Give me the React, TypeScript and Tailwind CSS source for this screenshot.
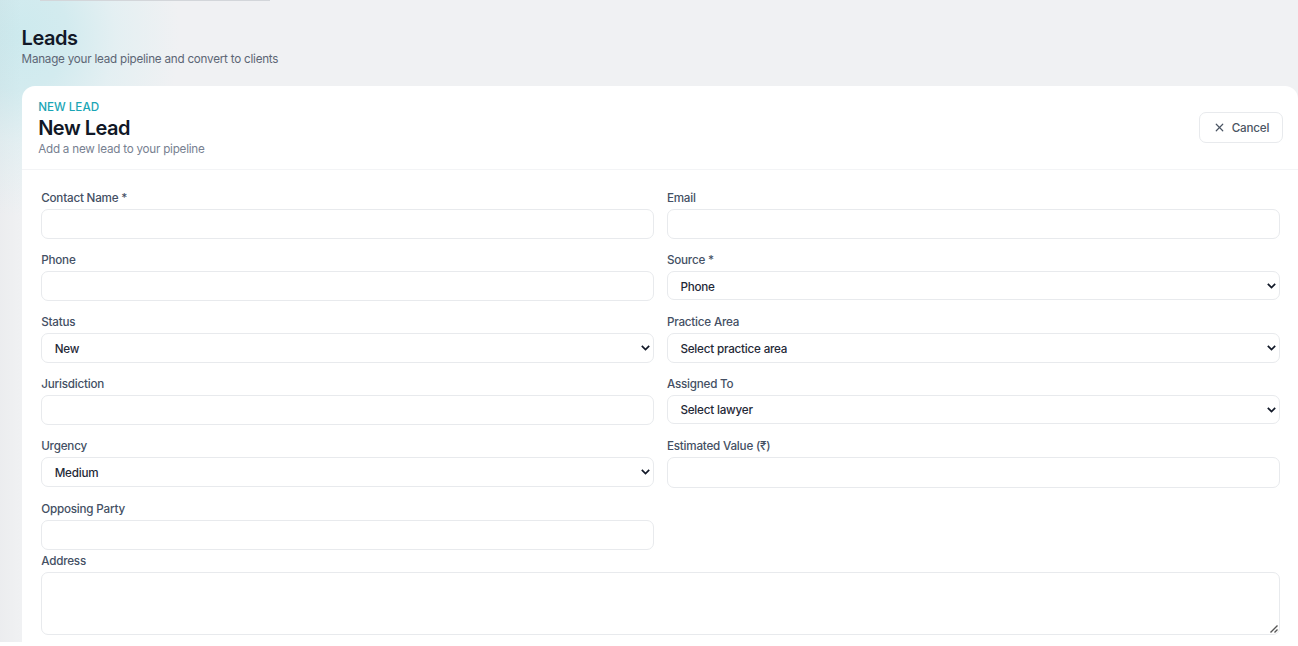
import { ReactNode, useState } from "react";
import { X } from "lucide-react";

const controlClass =
  "block w-full rounded-[7px] border border-[#e8eaed] bg-white text-[11.65px] font-medium tracking-[-0.2px] text-[#1f2937] outline-none";

type FieldProps = {
  label: string;
  children: ReactNode;
};

function Field({ label, children }: FieldProps) {
  return (
    <label className="block">
      <span className="mb-[3px] block text-[11.65px] leading-[15px] font-medium tracking-[-0.2px] text-[#445064]">
        {label}
      </span>
      {children}
    </label>
  );
}

function TextField({ label, name, type = "text" }: { label: string; name: string; type?: string }) {
  return (
    <Field label={label}>
      <input name={name} type={type} className={`${controlClass} h-[30.2px] px-3`} />
    </Field>
  );
}

function SelectField({ label, name, options }: { label: string; name: string; options: string[] }) {
  const [value, setValue] = useState(options[0]);

  return (
    <Field label={label}>
      <span className="relative block">
        <select
          name={name}
          value={value}
          onChange={(e) => setValue(e.target.value)}
          className={`${controlClass} h-[29.4px] appearance-none px-[12.5px] pt-[3px]`}
        >
          {options.map((option) => (
            <option key={option}>{option}</option>
          ))}
        </select>
        <svg
          viewBox="0 0 9 6"
          className="pointer-events-none absolute top-[11.5px] right-[4px] h-[6px] w-[9px]"
          fill="none"
          stroke="#111827"
          strokeWidth="1.7"
        >
          <path d="M0.8 0.9 4.5 4.5 8.2 0.9" />
        </svg>
      </span>
    </Field>
  );
}

export default function App() {
  return (
    <div className="h-[646px] overflow-hidden bg-white font-['Inter',sans-serif]">
      <main className="h-[642px] overflow-hidden bg-[#f0f1f3] bg-[linear-gradient(90deg,rgba(17,24,39,0.02),transparent_22px),radial-gradient(ellipse_160px_180px_at_20px_36px,#cdeaee_0%,#d3ebef_30%,rgba(224,239,242,0.75)_60%,rgba(240,241,243,0)_100%)] pl-[21.6px]">
        <div className="ml-[18px] h-px w-[230px] bg-[#d3d6da]" />
        <header className="h-[85px] pt-[25px]">
          <h1 className="text-[20px] leading-6 font-semibold tracking-[-0.45px] text-[#111827]">Leads</h1>
          <p className="mt-px text-[11.65px] leading-4 tracking-[-0.22px] text-[#5d6675]">
            Manage your lead pipeline and convert to clients
          </p>
        </header>

        <section className="h-[600px] rounded-t-[13px] bg-white">
          <div className="flex h-[84px] items-center justify-between border-b border-[#f3f4f6] pr-[15px] pl-[16.6px]">
            <div className="pt-px">
              <p className="text-[11.65px] leading-4 font-medium text-[#1aa5b5] uppercase">New Lead</p>
              <h2 className="mt-px text-[20px] leading-6 font-semibold tracking-[-0.5px] text-[#111827]">New Lead</h2>
              <p className="mt-px text-[11.65px] leading-4 tracking-[-0.22px] text-[#788191]">
                Add a new lead to your pipeline
              </p>
            </div>
            <button
              type="button"
              className="flex h-[31px] w-[84px] items-center justify-center gap-[6px] rounded-[7px] border border-[#e8eaed] text-[11.65px] font-medium tracking-[-0.2px] text-[#4b5563]"
            >
              <X size={13} strokeWidth={2.2} />
              <span className="pt-[2px]">Cancel</span>
            </button>
          </div>

          <form className="pt-[20.7px] pr-[18.4px] pl-[19.6px]">
            <div className="grid grid-cols-2 gap-x-[13px] gap-y-[14.2px]">
              <TextField label="Contact Name *" name="contactName" />
              <TextField label="Email" name="email" type="email" />
              <TextField label="Phone" name="phone" />
              <SelectField label="Source *" name="source" options={["Phone", "Email", "Website", "Referral"]} />
              <SelectField label="Status" name="status" options={["New", "Contacted", "Qualified"]} />
              <SelectField label="Practice Area" name="practiceArea" options={["Select practice area"]} />
              <TextField label="Jurisdiction" name="jurisdiction" />
              <SelectField label="Assigned To" name="assignedTo" options={["Select lawyer"]} />
              <SelectField label="Urgency" name="urgency" options={["Medium", "Low", "High"]} />
              <TextField label="Estimated Value (₹)" name="estimatedValue" />
              <TextField label="Opposing Party" name="opposingParty" />
            </div>
            <div className="mt-[4px]">
              <Field label="Address">
                <span className="relative block">
                  <textarea name="address" className={`${controlClass} h-[63px] resize-none px-3 py-2`} />
                  <svg
                    viewBox="0 0 8 8"
                    className="pointer-events-none absolute right-[2px] bottom-[2px] size-2"
                    stroke="#555"
                    strokeWidth="1.4"
                  >
                    <path d="M0.5 7.5 7.5 0.5M4.5 7.5 7.5 4.5" />
                  </svg>
                </span>
              </Field>
            </div>
          </form>
        </section>
      </main>
    </div>
  );
}
